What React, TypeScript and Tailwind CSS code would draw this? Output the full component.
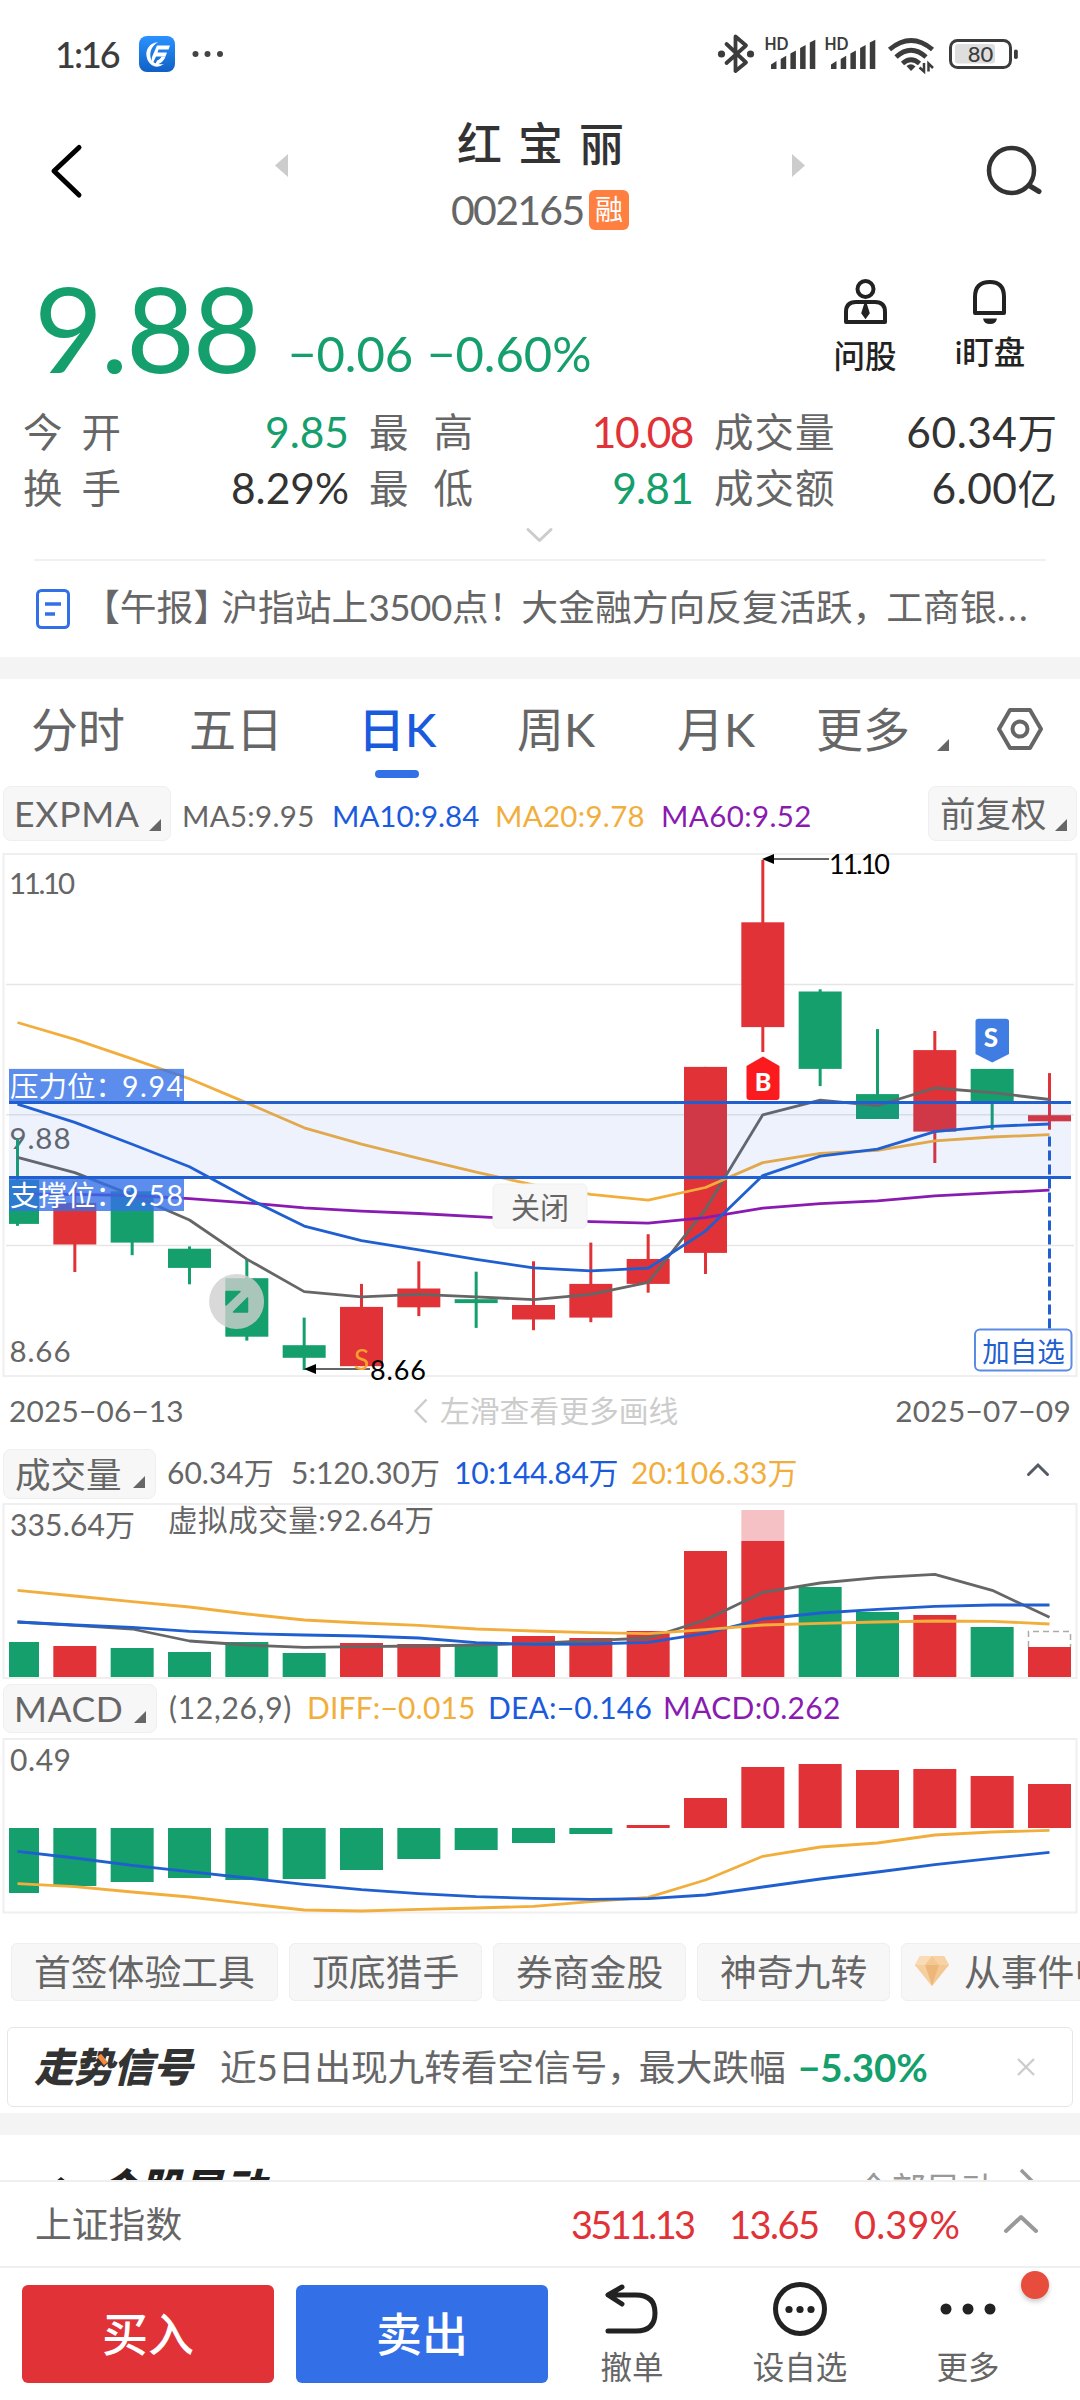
import React from "react";

const GREEN = "#149f6c";
const RED = "#e03237";
const BLUE = "#1f5fd0";
const ORANGE = "#f2ae3d";
const GRAY = "#666666";
const PURPLE = "#8a1bb0";

const cx = (i: number) => 17.5 + 57.333 * i;
const barX = (i: number) => (i === 0 ? 9 : cx(i) - 21.5);
const barW = (i: number) => (i === 0 ? 30 : 43);

// [rising, bodyTop, bodyBottom, high, low]
const candles: [number, number, number, number, number][] = [
  [0, 1179.8, 1223.9, 1138.5, 1225.8],
  [1, 1202.8, 1244.5, 1181.8, 1272],
  [0, 1191.3, 1242.6, 1186, 1255.2],
  [0, 1248.7, 1267.9, 1246.4, 1284.3],
  [0, 1278.2, 1336.7, 1259, 1340.6],
  [0, 1345.2, 1357.8, 1317.6, 1370],
  [1, 1306.9, 1366.2, 1283.9, 1366.2],
  [1, 1288.5, 1307.3, 1261.3, 1316.1],
  [0, 1299.2, 1303.1, 1271.7, 1327.9],
  [1, 1305, 1319.5, 1261.3, 1330.2],
  [1, 1283.9, 1317.6, 1242.6, 1322.2],
  [1, 1259, 1283.9, 1234.2, 1292.7],
  [1, 1066.9, 1252.9, 1066.9, 1274],
  [1, 922.3, 1027.1, 859.9, 1052],
  [0, 991.5, 1068.9, 989.3, 1086.1],
  [0, 1094.1, 1119, 1029.1, 1119],
  [1, 1050.1, 1131.6, 1031, 1163],
  [0, 1068.9, 1102.5, 1068.9, 1129.7],
  [1, 1115.2, 1121.3, 1073.1, 1129.7],
];

const priceY = (v: number) => 840 + v / 2.613;
const subY = (v: number) => 1430 + v / 3;

const ma5 = [829, 869, 928, 993, 1095, 1180, 1194, 1187, 1194, 1201, 1187, 1156, 965, 718, 680, 694, 648, 660, 678];
const ma10 = [690, 738, 795, 854, 935, 1009, 1047, 1071, 1096, 1118, 1126, 1119, 1022, 877, 826, 808, 762, 748, 742];
const ma20 = [477, 521, 572, 624, 687, 752, 795, 832, 868, 901, 926, 941, 908, 843, 819, 811, 786, 776, 770];
const ma60 = [925, 926, 929, 937, 948, 961, 970, 976, 984, 992, 997, 1001, 987, 962, 950, 943, 930, 922, 915];

const volumes = [636, 648, 654, 666, 636, 669, 639, 642, 645, 618, 624, 603, 363, 333, 471, 546, 555, 591, 651];
const volUp = [0, 1, 0, 0, 0, 0, 1, 1, 0, 1, 1, 1, 1, 1, 0, 0, 1, 0, 1];
const vol5 = [576, 586, 597, 633, 645, 652, 650, 648, 645, 640, 632, 624, 570, 487, 459, 443, 433, 481, 562];
const vol10 = [576, 585, 592, 604, 611, 615, 618, 624, 638, 643, 642, 637, 610, 567, 549, 538, 529, 525, 525];
const vol20 = [481, 498, 515, 531, 552, 570, 579, 586, 597, 603, 608, 611, 599, 585, 580, 576, 573, 574, 582];

const macd = [1389, 1368, 1356, 1344, 1350, 1347, 1320, 1287, 1260, 1239, 1212, 1185, 1104, 1011, 1002, 1020, 1017, 1038, 1062];
const diff = [1361, 1370, 1386, 1401, 1421, 1440, 1443, 1438, 1434, 1429, 1415, 1402, 1350, 1279, 1251, 1239, 1215, 1206, 1201];
const dea = [1264, 1284, 1306, 1325, 1344, 1363, 1379, 1391, 1400, 1405, 1408, 1406, 1395, 1371, 1347, 1326, 1304, 1285, 1267];

function Line({ data, y, color }: { data: number[]; y: (v: number) => number; color: string }) {
  return (
    <polyline
      points={data.map((v, i) => `${cx(i).toFixed(1)},${y(v).toFixed(1)}`).join(" ")}
      fill="none"
      stroke={color}
      strokeWidth={2.8}
      strokeLinejoin="round"
    />
  );
}

function Corner({ className = "" }: { className?: string }) {
  return (
    <svg className={`shrink-0 ${className}`} width="12" height="12" viewBox="0 0 12 12">
      <path d="M12 0V12H0Z" fill={GRAY} />
    </svg>
  );
}

function StatusBar() {
  return (
    <div className="flex h-[108px] items-center pl-[55px] text-[#3c3c3c]">
      <span className="w-[84px] whitespace-nowrap text-[36px] leading-[40px] font-medium tracking-[-2px]">1:16</span>
      <svg width="36" height="36" viewBox="0 0 36 36">
        <defs>
          <linearGradient id="appg" x1="0" y1="0" x2="0" y2="1">
            <stop offset="0" stopColor="#2a92ff" />
            <stop offset="1" stopColor="#1060c4" />
          </linearGradient>
        </defs>
        <rect width="36" height="36" rx="8" fill="url(#appg)" />
        <path d="M19 6C10 7 6.500 14 7.500 20C8.200 25 11 29 16 30.500C19 31 22 30 25 28C20 29 15 28 12.500 24C10 19 11 11 19 6Z" fill="#fff" />
        <path d="M18 9.500H31L29.500 13.500H19.500L18.500 16.500H28L26.500 20.500H17L14 27C12.800 25.500 12.500 23 13 21Z" fill="#fff" />
        <path d="M26.500 20.500C25 25 21 28.500 16 29L18 24.500C20 24 21.500 22.500 22.500 20.500Z" fill="#fff" />
      </svg>
      <svg className="ml-[17px]" width="32" height="8" viewBox="0 0 32 8">
        <circle cx="3.500" cy="4" r="3" fill="#444" />
        <circle cx="15.500" cy="4" r="3" fill="#444" />
        <circle cx="28" cy="4" r="3" fill="#444" />
      </svg>
      <svg className="ml-auto mr-[61px]" width="302" height="40" viewBox="717 34 302 40">
        <path d="M726.500 44L746 62.500L735.500 71V36.500L746 45.500L726.500 63" fill="none" stroke="#3c3c3c" strokeWidth="3.800" strokeLinejoin="round" strokeLinecap="round" />
        <circle cx="721.500" cy="54" r="3.600" fill="#3c3c3c" />
        <circle cx="750.500" cy="54" r="3.600" fill="#3c3c3c" />
        {[0, 60].map((o) => (
          <g key={o} fill="#3c3c3c">
            <text x={764.5 + o} y="50" fontSize="16.500" fontWeight="700" textLength="24" lengthAdjust="spacingAndGlyphs">HD</text>
            {[0, 1, 2, 3, 4].map((i) => (
              <path key={i} d={`M${771 + o + i * 9.7} 69V${64.5 - i * 5.5}L${776.5 + o + i * 9.7} ${61 - i * 5.3}V69Z`} />
            ))}
          </g>
        ))}
        <g fill="none" stroke="#3c3c3c" strokeWidth="4.800">
          <path d="M889.500 49.500Q911 31.500 932.500 49.500" />
          <path d="M896 57Q911 43.500 926 57" />
          <path d="M902.500 63.500Q911 56 919.500 63.500" />
        </g>
        <path d="M906.500 66Q911 62.500 915.500 66.500L911 71Z" fill="#3c3c3c" />
        <path d="M924 63V71.500L919.500 67.500M928.500 71.500V63.500L933 68" fill="none" stroke="#3c3c3c" strokeWidth="2.500" />
        <rect x="950.500" y="40.500" width="60" height="27" rx="7" fill="none" stroke="#3c3c3c" strokeWidth="3" />
        <rect x="955" y="44" width="40" height="19.500" rx="3" fill="#dedede" />
        <rect x="1014" y="49.500" width="3.800" height="9.500" rx="1.800" fill="#3c3c3c" />
        <text x="980.500" y="62" fontSize="22" textAnchor="middle" fontWeight="500" fill="#3c3c3c">80</text>
      </svg>
    </div>
  );
}

function Header() {
  return (
    <div className="flex h-[152px] items-start">
      <svg className="ml-[47px] mt-[34px]" width="38" height="58" viewBox="0 0 38 58">
        <path d="M32 5.500L7 29L32 53" fill="none" stroke="#000" strokeWidth="5" strokeLinecap="round" strokeLinejoin="round" />
      </svg>
      <svg className="ml-[190px] mt-[46px]" width="13" height="23" viewBox="0 0 13 23"><path d="M13 0V23L0 11.500Z" fill="#ccc" /></svg>
      <div className="flex w-[504px] flex-col items-center">
        <div className="mt-[6px] pl-[17px] text-[45px] leading-[60px] font-medium tracking-[16px] text-[#333]">红宝丽</div>
        <div className="mt-[14px] flex items-center">
          <span className="w-[138px] text-[41px] leading-[44px] tracking-[-1.7px] text-[#666]">002165</span>
          <span className="h-[40px] w-[40px] rounded-[6px] bg-[#ff7f41] text-center text-[28px] leading-[39px] text-white">融</span>
        </div>
      </div>
      <svg className="mt-[46px]" width="13" height="23" viewBox="0 0 13 23"><path d="M0 0V23L13 11.500Z" fill="#ccc" /></svg>
      <svg className="ml-[178px] mt-[34px]" width="62" height="60" viewBox="983 142 62 60">
        <circle cx="1011.500" cy="170.500" r="22.500" fill="none" stroke="#333" strokeWidth="4.500" />
        <path d="M1030 186L1039 191.500" stroke="#333" strokeWidth="5" strokeLinecap="round" />
      </svg>
    </div>
  );
}

function Quote() {
  return (
    <div className="h-[299px]">
      <div className="flex h-[144px]">
        <div className="w-[288px] pl-[34px] pt-[7px] text-[119px] leading-[120px] tracking-[-2.5px] text-[#149f6c]">9.88</div>
        <div className="w-[139px] whitespace-nowrap pt-[65px] text-[49px] leading-[56px] text-[#149f6c]">−0.06</div>
        <div className="w-[407px] whitespace-nowrap pt-[65px] text-[49px] leading-[56px] text-[#149f6c]">−0.60%</div>
        <div className="flex w-[62px] flex-col items-center pt-[18px]">
          <svg width="46" height="48" viewBox="841 278 46 48" fill="none" stroke="#222" strokeWidth="4">
            <circle cx="864.500" cy="289" r="8" />
            <path d="M845 322V312Q845 302 855 302H874Q884 302 884 312V322Z" strokeLinejoin="round" />
            <path d="M864.500 302L868 313L864.500 318L861 313Z" fill="#222" strokeWidth="1.500" />
          </svg>
          <span className="mt-[12px] whitespace-nowrap text-[31.500px] leading-[36px] text-[#222] font-medium">问股</span>
        </div>
        <div className="ml-[57px] flex w-[74px] flex-col items-center pt-[18px]">
          <svg width="40" height="48" viewBox="971 278 40 48">
            <path d="M976 313V297Q976 282 991 282Q1005 282 1005 297V313Z" fill="none" stroke="#222" strokeWidth="4" strokeLinejoin="round" />
            <path d="M984 318.500H998Q997 324 991 324Q985 324 984 318.500Z" fill="#222" />
          </svg>
          <span className="mt-[8px] whitespace-nowrap text-[31.500px] leading-[36px] text-[#222] font-medium">i盯盘</span>
        </div>
      </div>
      <div className="grid grid-cols-[326px_20px_324px_21px_343px] pl-[23px] text-[39.500px] leading-[55px] text-[#666]">
        <div className="flex justify-between"><span className="tracking-[19px]">今开</span><span className="text-[42.500px] text-[#149f6c]">9.85</span></div>
        <span />
        <div className="flex justify-between"><span className="tracking-[25px]">最高</span><span className="text-[42.500px] tracking-[-1.500px] text-[#e03237]">10.08</span></div>
        <span />
        <div className="flex justify-between"><span className="tracking-[1px]">成交量</span><span className="text-[#333]"><span className="text-[42.500px] tracking-[0.500px]">60.34</span>万</span></div>
        <div className="flex justify-between"><span className="tracking-[19px]">换手</span><span className="text-[42.500px] text-[#333]">8.29%</span></div>
        <span />
        <div className="flex justify-between"><span className="tracking-[25px]">最低</span><span className="text-[42.500px] tracking-[-0.800px] text-[#149f6c]">9.81</span></div>
        <span />
        <div className="flex justify-between"><span className="tracking-[1px]">成交额</span><span className="text-[#333]"><span className="text-[42.500px] tracking-[0.500px]">6.00</span>亿</span></div>
      </div>
      <svg className="ml-[524px] mt-[11px]" width="32" height="18" viewBox="0 0 32 18">
        <path d="M4 2.500L15.500 13.500L27 2.500" fill="none" stroke="#ccc" strokeWidth="3" strokeLinecap="round" strokeLinejoin="round" />
      </svg>
    </div>
  );
}

function News() {
  return (
    <div className="mx-[34px] flex h-[98px] items-center border-t-2 border-[#f0f0f0]">
      <svg className="ml-[1px]" width="36" height="42" viewBox="0 0 36 42" fill="none" stroke="#3370e7">
        <rect x="2.500" y="2.500" width="31" height="37" rx="4" strokeWidth="3" />
        <path d="M10 16H26M10 26H20" strokeWidth="3.500" />
      </svg>
      <div className="ml-[12px] flex items-center whitespace-nowrap pb-[5px] text-[36.800px] leading-[50px] text-[#666]">
        <span>【午报】</span>
        <span className="-ml-[9px]">沪指站上<span className="tracking-[-0.500px]">3500</span>点！</span>
        <span className="-ml-[4px]">大金融方向反复活跃，</span>
        <span className="-ml-[3px]">工商银</span>
        <span className="tracking-[2.500px]">...</span>
      </div>
    </div>
  );
}

function Tabs() {
  return (
    <div className="flex h-[102px] whitespace-nowrap text-[47px] leading-[100px] text-[#666]">
      <span className="ml-[31px] w-[158px]">分时</span>
      <span className="w-[169px]">五日</span>
      <span className="relative w-[159px] font-medium text-[#1a5bde]">
        日K
        <i className="absolute left-[17px] top-[91px] h-[8px] w-[44px] rounded-full bg-[#3370e7]" />
      </span>
      <span className="w-[160px]">周K</span>
      <span className="w-[139px]">月K</span>
      <span className="w-[121px]">更多</span>
      <Corner className="mt-[60px]" />
      <svg className="ml-[47px] mt-[27px]" width="48" height="46" viewBox="0 0 48 46" fill="none" stroke="#666" strokeWidth="4">
        <path d="M14 4H34L45 23L34 42H14L3 23Z" strokeLinejoin="round" />
        <circle cx="24" cy="23" r="7.500" />
      </svg>
    </div>
  );
}

function Pill({ children, className }: { children: React.ReactNode; className: string }) {
  return (
    <div className={`flex shrink-0 items-center whitespace-nowrap rounded-[8px] border border-[#efefef] bg-[#f7f7f7] text-[#666] ${className}`}>
      {children}
    </div>
  );
}

function MaRow() {
  return (
    <div className="flex h-[69px] items-start whitespace-nowrap pl-[3px] pt-[5px] text-[29.500px] leading-[60px]">
      <Pill className="h-[55px] w-[168px] pl-[10px] text-[35.500px]">
        <span className="w-[135px] tracking-[0.800px]">EXPMA</span>
        <Corner className="mt-[22px]" />
      </Pill>
      <div className="flex w-[757px] pl-[11px]">
        <span className="w-[150px] tracking-[0.300px] text-[#666]">MA5:9.95</span>
        <span className="w-[163px] text-[#1a5bde]">MA10:9.84</span>
        <span className="w-[166px] tracking-[0.300px] text-[#f2ae3d]">MA20:9.78</span>
        <span className="tracking-[0.400px] text-[#8a1bb0]">MA60:9.52</span>
      </div>
      <Pill className="h-[55px] w-[149px] pl-[11px] text-[35.500px]">
        <span className="w-[115px]">前复权</span>
        <Corner className="mt-[22px]" />
      </Pill>
    </div>
  );
}

function PriceChart() {
  return (
    <svg className="block" width="1080" height="534" viewBox="0 850 1080 534">
      <rect x="3.500" y="854" width="1073" height="522" fill="#fff" stroke="#efefef" strokeWidth="2" />
      {[984.5, 1114.8, 1245.5].map((y) => (
        <path key={y} d={`M6 ${y}H1074`} stroke="#e6e6e6" strokeWidth="1.500" />
      ))}
      <text x="9" y="894" fontSize="29.500" textLength="66" fill={GRAY}>11.10</text>
      <text x="9.500" y="1149" fontSize="29.500" textLength="61" fill={GRAY}>9.88</text>
      <text x="9.500" y="1361.500" fontSize="29.500" textLength="61" fill={GRAY}>8.66</text>
      {candles.map(([up, t, b, h, l], i) => (
        <g key={i} fill={up ? RED : GREEN}>
          <rect x={cx(i) - 1.5} y={h} width="3" height={l - h} />
          <rect x={barX(i)} y={t} width={barW(i)} height={b - t} />
        </g>
      ))}
      <Line data={ma5} y={priceY} color={GRAY} />
      <Line data={ma60} y={priceY} color={PURPLE} />
      <Line data={ma20} y={priceY} color={ORANGE} />
      <Line data={ma10} y={priceY} color={BLUE} />
      <path d="M1049.500 1136.600V1329" stroke={BLUE} strokeWidth="3" strokeDasharray="10 4" />
      <rect x="9" y="1102" width="1062" height="75.500" fill="#3370e7" fillOpacity="0.090" />
      <rect x="9" y="1068.900" width="175" height="33" fill="#3370e7" fillOpacity="0.800" />
      <rect x="9" y="1178" width="175" height="33" fill="#3370e7" fillOpacity="0.800" />
      <path d="M9 1102.500H1071M9 1177.500H1071" stroke={BLUE} strokeWidth="3" />
      <g fontSize="28.500" fill="#fff">
        <text x="10" y="1097">压力位：</text>
        <text x="122" y="1097" textLength="61">9.94</text>
        <text x="10" y="1206">支撑位：</text>
        <text x="122" y="1206" textLength="61">9.58</text>
      </g>
      <path d="M773 859H829M314 1369H370" stroke="#333" strokeWidth="1.500" />
      <path d="M762 859L774 854V864ZM304 1369L316 1364V1374Z" fill="#000" />
      <text x="829" y="873.500" fontSize="27" textLength="61" fill="#000">11.10</text>
      <text x="354" y="1369.500" fontSize="28" fill="#f9a12a">S</text>
      <text x="370" y="1380" fontSize="27" textLength="56" fill="#000">8.66</text>
      <circle cx="236.600" cy="1301.500" r="27.500" fill="#cfcfcf" fillOpacity="0.800" />
      <path d="M226 1291.500H240L226 1305ZM247.500 1298V1312H233.500Z" fill={GREEN} stroke={GREEN} strokeWidth="1.500" strokeLinejoin="round" />
      <path d="M763 1056.500L779.500 1066V1097Q779.500 1100 776.500 1100H749.500Q746.500 1100 746.500 1097V1066Z" fill="#fb1b1f" />
      <text x="763" y="1090.500" fontSize="25" fontWeight="900" textAnchor="middle" fill="#fff">B</text>
      <path d="M992.300 1062.500L1009 1054V1021.500Q1009 1018.700 1006 1018.700H978.500Q975.500 1018.700 975.500 1021.500V1054Z" fill="#3f7de3" />
      <text x="991" y="1047" fontSize="26" fontWeight="900" textAnchor="middle" fill="#fff">S</text>
      <rect x="493" y="1184" width="94" height="44" rx="5" fill="#f7f7f7" stroke="#efefef" />
      <text x="540" y="1218.500" fontSize="29" textAnchor="middle" fill={GRAY}>关闭</text>
      <rect x="975" y="1329.500" width="96.500" height="41" rx="5" fill="#fff" stroke="#5b8be3" strokeWidth="2" />
      <text x="1023.500" y="1361.500" fontSize="27.500" textAnchor="middle" fill={BLUE}>加自选</text>
    </svg>
  );
}

function DateRow() {
  return (
    <div className="flex h-[65px] items-center whitespace-nowrap pb-[12px] pl-[9px] pr-[9px] text-[29.800px] leading-[40px] text-[#666]">
      <span className="w-[405px] tracking-[0.200px]">2025−06−13</span>
      <svg width="14" height="26" viewBox="0 0 14 26"><path d="M12.500 1.500L1.500 13L12.500 24.500" fill="none" stroke="#ccc" strokeWidth="2.500" /></svg>
      <span className="ml-[12px] text-[#ccc]">左滑查看更多画线</span>
      <span className="ml-auto tracking-[0.300px]">2025−07−09</span>
    </div>
  );
}

function VolumeHead() {
  return (
    <div className="flex h-[54px] whitespace-nowrap pl-[3px] text-[30px] leading-[47px]">
      <Pill className="h-[50px] w-[153px] pl-[11px] text-[35.500px]">
        <span className="w-[118px]">成交量</span>
        <Corner className="mt-[16px]" />
      </Pill>
      <span className="ml-[11px] w-[124px] text-[#666]">60.34万</span>
      <span className="w-[163px] text-[#666]">5:120.30万</span>
      <span className="w-[177px] tracking-[-0.200px] text-[#1a5bde]">10:144.84万</span>
      <span className="text-[#f2ae3d]">20:106.33万</span>
      <svg className="ml-auto mr-[30px] mt-[13px]" width="24" height="16" viewBox="0 0 24 16"><path d="M2.500 12.500L12 3L21.500 12.500" fill="none" stroke="#555b66" strokeWidth="3" strokeLinecap="round" /></svg>
    </div>
  );
}

function VolumeChart() {
  return (
    <svg className="block" width="1080" height="181" viewBox="0 1503 1080 181">
      <rect x="3.500" y="1504" width="1073" height="174" fill="#fff" stroke="#efefef" strokeWidth="2" />
      <text x="10" y="1536" fontSize="30" textLength="125" fill={GRAY}>335.64万</text>
      <text x="168" y="1531" fontSize="29.500" textLength="266" fill={GRAY}>虚拟成交量:92.64万</text>
      <rect x={barX(13)} y="1510" width="43" height="31" fill="#f5c1c4" />
      {volumes.map((v, i) => (
        <rect key={i} x={barX(i)} y={subY(v)} width={barW(i)} height={1677 - subY(v)} fill={volUp[i] ? RED : GREEN} />
      ))}
      <path d="M1028.500 1647V1631.500H1070.500V1647" fill="none" stroke="#aaa" strokeWidth="1.500" strokeDasharray="6 4" />
      <Line data={vol5} y={subY} color={GRAY} />
      <Line data={vol10} y={subY} color={BLUE} />
      <Line data={vol20} y={subY} color={ORANGE} />
    </svg>
  );
}

function MacdHead() {
  return (
    <div className="flex h-[54px] whitespace-nowrap pl-[3px] text-[30px] leading-[47px]">
      <Pill className="h-[49px] w-[154px] pl-[10px] text-[35.500px]">
        <span className="w-[120px] tracking-[0.600px]">MACD</span>
        <Corner className="mt-[16px]" />
      </Pill>
      <span className="ml-[12px] w-[138px] tracking-[0.700px] text-[#666]">(12,26,9)</span>
      <span className="w-[181px] tracking-[0.200px] text-[#f2ae3d]">DIFF:−0.015</span>
      <span className="w-[175px] tracking-[0.200px] text-[#1a5bde]">DEA:−0.146</span>
      <span className="tracking-[0.300px] text-[#8a1bb0]">MACD:0.262</span>
    </div>
  );
}

function MacdChart() {
  return (
    <svg className="block" width="1080" height="177" viewBox="0 1738 1080 177">
      <rect x="3.500" y="1739" width="1073" height="173.500" fill="#fff" stroke="#efefef" strokeWidth="2" />
      <text x="10" y="1770.500" fontSize="30" textLength="61" fill={GRAY}>0.49</text>
      {macd.map((v, i) => {
        const y = subY(v);
        return <rect key={i} x={barX(i)} y={Math.min(y, 1828)} width={barW(i)} height={Math.abs(y - 1828)} fill={y < 1828 ? RED : GREEN} />;
      })}
      <Line data={diff} y={subY} color={ORANGE} />
      <Line data={dea} y={subY} color={BLUE} />
    </svg>
  );
}

function Chips() {
  const chip = "h-[58px] shrink-0 rounded-[6px] border border-[#efefef] bg-[#f7f7f7] px-[22px]";
  return (
    <div className="flex h-[112px] gap-[11px] overflow-hidden whitespace-nowrap pl-[11px] pt-[28px] text-[36.800px] leading-[56px] text-[#666]">
      <span className={`${chip} w-[267px]`}>首签体验工具</span>
      <span className={`${chip} w-[193px]`}>顶底猎手</span>
      <span className={`${chip} w-[193px]`}>券商金股</span>
      <span className={`${chip} w-[193px]`}>神奇九转</span>
      <span className="flex h-[58px] w-[330px] shrink-0 items-center rounded-[6px] border border-[#efefef] bg-[#f7f7f7] pl-[12px]">
        <svg className="mb-[3px]" width="36" height="32" viewBox="0 0 36 32">
          <path d="M6 1H30L35 10L18 31L1 10Z" fill="#f3c893" />
          <path d="M6 1L1 10H11L18 1Z" fill="#f9dcb6" />
          <path d="M30 1L35 10H25L18 1Z" fill="#f6d2a4" />
          <path d="M11 10H25L18 31Z" fill="#edb779" />
          <path d="M1 10H11L18 31Z" fill="#f6cfa0" />
        </svg>
        <span className="ml-[14px]">从事件中选股</span>
      </span>
    </div>
  );
}

function Signal() {
  return (
    <div className="mx-[7px] flex h-[80px] items-center whitespace-nowrap rounded-[6px] border-[1.500px] border-[#e6e6e6] text-[36.800px] leading-[50px] text-[#666]">
      <span className="relative ml-[26px] w-[186px] text-[40px] font-black italic tracking-[-0.500px] text-[#333]">
        走势信号
        <i className="absolute left-[66px] top-[12px] h-[11px] w-[5px] -rotate-[38deg] bg-[#f58a3c]" />
      </span>
      <span className="tracking-[-0.200px]">近5日出现九转看空信号，</span>
      <span className="-ml-[5px]">最大跌幅</span>
      <span className="ml-[12px] text-[38.500px] font-bold text-[#149f6c]">−5.30%</span>
      <svg className="ml-auto mr-[37px]" width="18" height="18" viewBox="0 0 18 18"><path d="M1 1L17 17M17 1L1 17" stroke="#ccc" strokeWidth="2.300" /></svg>
    </div>
  );
}

function MoreSection() {
  return (
    <div className="flex h-[45px] overflow-hidden whitespace-nowrap">
      <svg className="ml-[54px] mt-[42px]" width="14" height="6" viewBox="0 0 14 6"><path d="M7 0L12 4H2Z" fill="#222" /></svg>
      <span className="ml-[29px] mt-[25px] text-[42px] leading-[56px] font-black italic text-[#222]">个股异动</span>
      <span className="ml-auto mt-[31px] text-[35px] leading-[46px] text-[#999]">全部异动</span>
      <svg className="ml-[22px] mt-[33px] mr-[44px]" width="18" height="30" viewBox="0 0 18 30"><path d="M3 2L15 14L3 26" fill="none" stroke="#999" strokeWidth="3.500" /></svg>
    </div>
  );
}

function IndexRow() {
  return (
    <div className="flex h-[88px] items-center border-y-2 border-[#efefef] pl-[35px] text-[36.800px] leading-[50px] text-[#e03237]">
      <span className="text-[#666]">上证指数</span>
      <span className="ml-auto w-[158px] text-[38px] tracking-[-2.700px]">3511.13</span>
      <span className="w-[125px] text-[38px] tracking-[-1.500px]">13.65</span>
      <span className="w-[149px] text-[38px] tracking-[0.100px]">0.39%</span>
      <svg className="mr-[41px]" width="36" height="20" viewBox="0 0 36 20"><path d="M3 17L18 3L33 17" fill="none" stroke="#999" strokeWidth="4" strokeLinecap="round" strokeLinejoin="round" /></svg>
    </div>
  );
}

function ActionBar() {
  return (
    <div className="flex h-[132px] items-start pl-[22px] pt-[13px] text-[#666]">
      <button className="mt-[4px] h-[98px] w-[252px] rounded-[6px] bg-[#e13238] text-[46px] leading-[98px] font-medium text-white">买入</button>
      <button className="mt-[4px] ml-[22px] h-[98px] w-[252px] rounded-[6px] bg-[#3370e7] text-[46px] leading-[98px] font-medium text-white">卖出</button>
      <div className="ml-[50px] flex w-[68px] flex-col items-center text-[31.500px] leading-[36px]">
        <svg width="60" height="56" viewBox="604 2281 60 56" fill="none" stroke="#222" strokeWidth="5" strokeLinecap="round" strokeLinejoin="round">
          <path d="M610 2331H638Q657 2331 657 2313Q657 2295 638 2295H611M624 2287L610 2295L624 2304" />
        </svg>
        <span className="mt-[12px] whitespace-nowrap">撤单</span>
      </div>
      <div className="ml-[84px] flex w-[100px] flex-col items-center text-[31.500px] leading-[36px]">
        <svg width="60" height="56" viewBox="0 0 60 56">
          <circle cx="30" cy="28" r="24.500" fill="none" stroke="#222" strokeWidth="5" />
          {[19, 30, 41].map((x) => <circle key={x} cx={x} cy="28.500" r="3.600" fill="#222" />)}
        </svg>
        <span className="mt-[12px] whitespace-nowrap">设自选</span>
      </div>
      <div className="relative ml-[84px] flex w-[68px] flex-col items-center text-[31.500px] leading-[36px]">
        <svg width="60" height="56" viewBox="0 0 60 56">
          {[8, 30, 52].map((x) => <circle key={x} cx={x} cy="28" r="5.500" fill="#222" />)}
        </svg>
        <span className="mt-[12px] whitespace-nowrap">更多</span>
        <i className="absolute left-[87px] top-[-10px] h-[28px] w-[28px] rounded-full bg-[#e74c3c] shadow-[0_3px_5px_rgba(0,0,0,0.2)]" />
      </div>
    </div>
  );
}

export default function App() {
  return (
    <div className="h-[2400px] w-[1080px] overflow-hidden bg-white font-[Lato,'Noto_Sans_CJK_SC',sans-serif]">
      <StatusBar />
      <Header />
      <Quote />
      <News />
      <div className="h-[22px] bg-[#f4f4f4]" />
      <Tabs />
      <MaRow />
      <PriceChart />
      <DateRow />
      <VolumeHead />
      <VolumeChart />
      <MacdHead />
      <MacdChart />
      <Chips />
      <Signal />
      <div className="mt-[6px] h-[22px] bg-[#f4f4f4]" />
      <MoreSection />
      <IndexRow />
      <ActionBar />
    </div>
  );
}
